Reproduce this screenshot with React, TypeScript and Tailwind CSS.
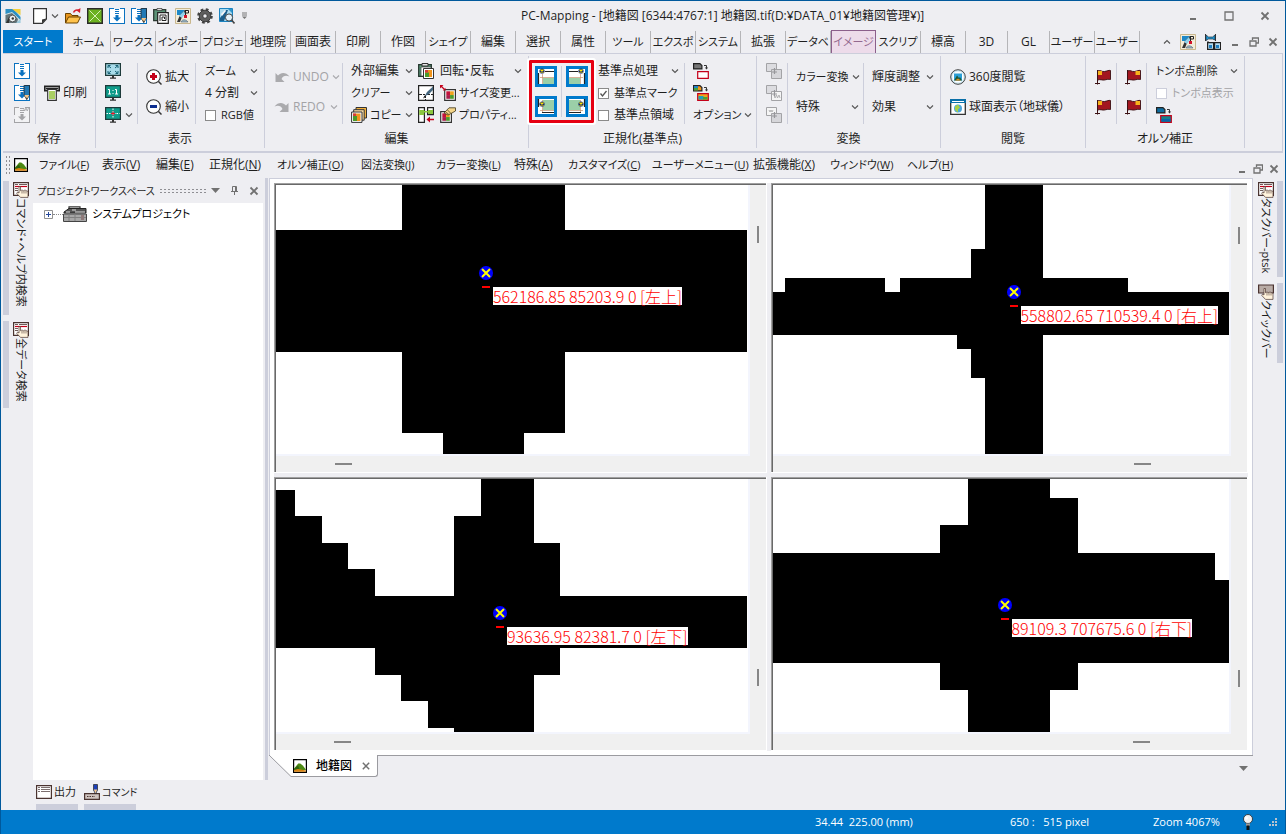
import type { ReactNode } from "react";

type IconProps = { children: ReactNode; size?: string; box?: string };

function Icon({ children, size = "size-4", box = "0 0 16 16" }: IconProps) {
  return (
    <svg viewBox={box} className={`${size} shrink-0`} aria-hidden="true">
      {children}
    </svg>
  );
}

function Chevron({ up = false, dim = false }: { up?: boolean; dim?: boolean }) {
  return (
    <Icon size="size-2" box="0 0 8 8">
      <path
        d={up ? "M1 5.5 4 2.5 7 5.5" : "M1 2.5 4 5.5 7 2.5"}
        fill="none"
        stroke={dim ? "#a9a9ad" : "#555"}
        strokeWidth="1.1"
      />
    </Icon>
  );
}

/* ---------- icons ---------- */

const MapLogo = () => (
  <Icon>
    <path d="M.5 1h15v14H.5z" fill="#d3e2e6" />
    <path d="M.5 1h8l7 8v3L7 4 .5 6z" fill="#2b8fc4" />
    <path d="M7 1h8.500v6z" fill="#f5cf3a" />
    <path d="M.5 7 7 5l6 6-1 4H.5z" fill="#63757a" />
    <circle cx="7.500" cy="10.500" r="3.400" fill="#eef2f3" stroke="#333" strokeWidth=".8" />
    <circle cx="7.800" cy="10.500" r="1.200" fill="#333" />
    <path d="M1 15 4 9v6z" fill="#333" />
    <path d="M11 15h4.500v-4z" fill="#9ecadd" />
  </Icon>
);

const NewDoc = () => (
  <Icon size="h-4 w-[14px]" box="0 0 14 16">
    <path d="M.6.600h12.800v10.400l-4 4.400H.6z" fill="#fff" stroke="#333" strokeWidth="1.200" />
    <path d="M13.400 10.500 9 11.500v4z" fill="#333" />
  </Icon>
);

const OpenFolder = () => (
  <Icon>
    <path d="M.5 15V5.500h5l1.500 2h6V9" fill="#e8951d" stroke="#6b4200" />
    <path d="M.5 15 3.500 9H15.500L12.500 15z" fill="#ffc34d" stroke="#6b4200" />
    <path d="M8.500 4.500C9.500 2 12 1.500 14 2.500" fill="none" stroke="#d4202e" strokeWidth="1.500" />
    <path d="m15.500 0-.5 5-3.500-2.500z" fill="#d4202e" />
  </Icon>
);

const GreenCross = () => (
  <Icon>
    <path d="M.7.700h14.600v14.600H.7z" fill="#6bb120" stroke="#2a2a2a" strokeWidth="1.400" />
    <path d="m2.500 2.500 11 11m0-11-11 11" stroke="#f2ffe0" strokeWidth=".8" />
  </Icon>
);

const SaveArrow = ({ pencil = false, gray = false }: { pencil?: boolean; gray?: boolean }) => (
  <Icon>
    <path
      d="M5 .5H.5v15h15V.5H11"
      fill={gray ? "#f2f2f4" : "#fff"}
      stroke={gray ? "#a3a3a6" : "#0a72c0"}
      strokeDasharray={gray ? "12 4 40" : undefined}
      shapeRendering="crispEdges"
    />
    <g fill={gray ? "#a3a3a6" : "#0a72c0"}>
      <path d="M6 1h4v1H6zM6 3h4v1H6zM6 5h4v1H6z" />
      <path d="M6.500 7h3v2.500H12L8 13.500 4 9.500h2.500z" />
    </g>
    {gray && <path d="m9.500 1 1.200 3 1.300-3 1.200 3 1.300-3" fill="none" stroke="#a3a3a6" strokeWidth=".8" />}
    {pencil && (
      <>
        <path d="M10 .4h5.500V10L12.800 14.600 10 10z" fill="#2179b5" stroke="#222" strokeWidth=".8" />
        <path d="M10.400 10h4.800l-2.400 4.500z" fill="#f4c78a" />
        <path d="m12 12.800.8 2 .8-2z" fill="#222" />
      </>
    )}
  </Icon>
);

const CopySpiral = () => (
  <Icon>
    <path d="M.7 1.700h12v11h-12z" fill="#5c9277" stroke="#2c3a33" strokeWidth="1.300" />
    <path d="M4 .5h5v2H4z" fill="#ddd" stroke="#333" strokeWidth=".7" />
    <path d="M4.700 4.700h10.600v10.600H4.700z" fill="#fff" stroke="#222" strokeWidth="1.200" />
    <path d="M7 13V7h6v5.500H9V9h2.500v2" fill="none" stroke="#222" />
  </Icon>
);

const MapTool = () => (
  <Icon>
    <path d="M.5.500h15v15H.5z" fill="#f3ecd9" stroke="#c9b78d" />
    <path d="M2 2h8L6 7H2z" fill="#1e88c7" />
    <path d="m2 14 3-7 5-5 1 1-4 6-2 5z" fill="#333" />
    <path d="m4 8 5-5 1 3-3 4z" fill="#8fd0ea" />
    <path d="M10.500 8V2M10.500 2.500h3V5h-3" fill="none" stroke="#222" />
    <path d="M9 7h3v3H9z" fill="#d3122a" />
    <path d="M6 14c1-3 5-3 7 0z" fill="#9bb7c2" stroke="#567" strokeWidth=".6" />
  </Icon>
);

const Gear = () => (
  <Icon>
    <circle cx="8" cy="8" r="6.500" fill="none" stroke="#444" strokeWidth="2.600" strokeDasharray="2.700 2.405" />
    <circle cx="8" cy="8" r="5.800" fill="#5e5e5e" stroke="#3c3c3c" />
    <circle cx="8" cy="8" r="2.200" fill="#eeeef2" stroke="#2c2c2c" strokeWidth=".8" />
  </Icon>
);

const MapSearch = () => (
  <Icon>
    <path d="M.5.500h13v13H.5z" fill="#a9dbf0" stroke="#1b83c0" />
    <path d="M1 10 7 2h2L5 13H1z" fill="#1b5f8c" />
    <path d="m2 6 4-4 1 1-4 5z" fill="#f7f7f7" />
    <path d="M9 1h4v4z" fill="#2f95cc" />
    <circle cx="10" cy="9.500" r="3.600" fill="#e3f2fa" stroke="#444" />
    <path d="m12.500 12 3 3.500" stroke="#444" strokeWidth="1.600" />
  </Icon>
);

const Printer = () => (
  <Icon>
    <path d="M.7 1.200h14.600v4.500H.7z" fill="#9b9b9b" stroke="#222" strokeWidth="1.400" />
    <path d="M2 3h12v1H2z" fill="#222" />
    <path d="M3.700 4.500h8.600v10.800H3.700z" fill="#fff" stroke="#333" strokeWidth="1.200" />
    <path d="M5 6h6v8H5z" fill="#a9ce63" />
  </Icon>
);

const Monitor = ({ kind }: { kind: "fit" | "one" | "cross" }) => (
  <Icon>
    <path
      d="M.6.600h14.800v11.800H.6z"
      fill={kind === "fit" ? "#a9dcea" : "#0f9c8a"}
      stroke="#1d3a3a"
      strokeWidth="1.200"
    />
    <path d="M7 12.500h2v2H7zM5 14.500h6v1.200H5z" fill="#333" />
    {kind === "fit" && (
      <path
        d="M3 5V2.500h2.500M10.500 2.500H13V5M13 8v2.500h-2.500M5.500 10.500H3V8M3 2.500l3 2.500M13 2.500 10 5M3 10.500 6 8M13 10.500 10 8"
        fill="none"
        stroke="#176073"
      />
    )}
    {kind === "one" && (
      <path d="M3 4.500h1.500V9M3 9h3M10 4.500h1.500V9M10 9h3M8 5v1M8 8v1" fill="none" stroke="#fff" />
    )}
    {kind === "cross" && (
      <>
        <path d="M8 1.500v10M1.500 6.500h13" stroke="#fff" strokeDasharray="1.500 1" />
        <path d="M8 4.500v4M6 6.500h4" stroke="#e0182d" />
      </>
    )}
  </Icon>
);

const Zoomer = ({ plus = false }: { plus?: boolean }) => (
  <Icon>
    <circle cx="7.500" cy="7.500" r="6.800" fill="#fdfdfd" stroke="#333" strokeWidth="1.100" />
    <path d="m12.500 12.500 3 3" stroke="#333" strokeWidth="1.500" />
    {plus ? (
      <path d="M6 4h3v2h2v3H9v2H6V9H4V6h2z" fill="#c4001a" />
    ) : (
      <path d="M4 6h7v3H4z" fill="#0b2d8f" />
    )}
  </Icon>
);

const CurveArrow = ({ flip = false }: { flip?: boolean }) => (
  <Icon>
    <path
      d={
        flip
          ? "M.5 7.500C4 3 9 3 12 6.500L14.500 4v9h-9l3-3C7 6.500 4 6 .5 7.500z"
          : "M15.500 7.500C12 3 7 3 4 6.500L1.500 4v9h9l-3-3C9 6.500 12 6 15.500 7.500z"
      }
      fill="#aaaaad"
    />
  </Icon>
);

const ColorTile = ({ x, y, s }: { x: number; y: number; s: number }) => (
  <g transform={`translate(${x} ${y}) scale(${s / 10})`}>
    <path d="M0 0h10v10H0z" fill="#fff" stroke="#333" strokeWidth="1.100" />
    <path d="M1.500 1.500h3.500V5H1.500z" fill="#c3133b" />
    <path d="M5 1.500h3.500V5H5z" fill="#f0a21c" />
    <path d="M1.500 5h3.500v3.500H1.500z" fill="#a91d4c" />
    <path d="M5 5h3.500v3.500H5z" fill="#4c9a2a" />
  </g>
);

const PasteTile = () => (
  <Icon>
    <path d="M.7 1.700h12.600v11.600H.7z" fill="#5f9a7d" stroke="#24362d" strokeWidth="1.300" />
    <path d="M4 .5h6v2.500H4z" fill="#e5e5e5" stroke="#333" />
    <path d="M3 4h10v9H3z" fill="#fff" stroke="#333" strokeWidth=".7" />
    <path d="M5.500 5.500h10v10h-10z" fill="#fff" stroke="#333" />
    <path d="M7 7h7v7H7z" fill="#f0941c" />
    <path d="M7 9.500h4V14H7z" fill="#4c9a2a" />
    <path d="M7 7h3v2.500H7z" fill="#d23c3c" />
  </Icon>
);

const CopyTile = () => (
  <Icon>
    <path d="M5 .5h10.500v10.500H5z" fill="#f3b03a" stroke="#333" />
    <path d="M2.700 2.700h10.500v10.500H2.700z" fill="#f7d9a3" stroke="#333" />
    <path d="M.6 5h10.400v10.400H.6z" fill="#fff" stroke="#333" />
    <path d="M2 6.500h7.500V14H2z" fill="#f0941c" />
    <path d="M2 9h4v5H2z" fill="#4c9a2a" />
    <path d="M2 6.500h3V9H2z" fill="#d23c3c" />
  </Icon>
);

const PenCut = () => (
  <Icon>
    <path d="M.6.600h14.800v14.800H.6z" fill="#fff" stroke="#222" strokeWidth="1.200" />
    <path d="M1 9.500h6M9 9.500h6M7.500 10v5" stroke="#222" strokeDasharray="3 1" />
    <path d="M15 1.500 9 7l-2.500 4.500L11 9l4-4z" fill="#45677f" />
    <path d="m6.500 10.500-1.500 3 3-1.500z" fill="#222" />
  </Icon>
);

const ResizeTile = () => (
  <Icon>
    <ColorTile x={4.700} y={4.700} s={10.700} />
    <path d="M1 1l3.500 3.500" stroke="#c4001a" strokeWidth="1.200" />
    <path d="M0 0h3.500L0 3.500z" fill="#c4001a" />
    <path d="M5.500 5.500H2.800L5.500 2.800z" fill="#c4001a" />
  </Icon>
);

const PropTile = () => (
  <Icon>
    <ColorTile x={0.700} y={4.700} s={10.700} />
    <path d="M4 6 9 .8h6.500V4L11 6.500 8 8z" fill="#f4d58a" stroke="#3b3319" strokeWidth=".8" />
    <path d="m5.500 5 3 2M7.500 3l3 3" stroke="#3b3319" strokeWidth=".7" />
  </Icon>
);

const MergeTile = () => (
  <Icon>
    <path d="M.6.600h5.800v14.800H.6zM9.600.600h5.800v7H9.600z" fill="#fff" stroke="#222" strokeWidth="1.200" />
    <path d="M1.200 3h5v5h-5zM10 3h5v4h-5z" fill="#8cc63f" />
    <path d="M6 4h4v1.500H6z" fill="#8cc63f" />
    <path d="M10 12.500h6" stroke="#c4001a" strokeWidth="1.500" />
    <path d="M12 9.500v6L8.500 12.500z" fill="#c4001a" />
  </Icon>
);

/* corner = where the control point sits in the sheet */
const CORNERS = {
  tl: { cx: 7, cy: 5, fill: "M8 12h11v6H8z", edge: "M3.500 7v11M10 5.500h9", cross: "M7.500 8v10M5 11.500h14" },
  tr: { cx: 15, cy: 5, fill: "M3 12h11v6H3z", edge: "M18.500 7v11M3 5.500h9", cross: "M14.500 8v10M3 11.500h14" },
  bl: { cx: 7, cy: 8, fill: "M8 4h11v10H8z", edge: "M3.500 3v8M7 16.500h12", cross: "M7.500 4v12M5 14.500h14" },
  br: { cx: 15, cy: 8, fill: "M3 4h11v10H3z", edge: "M18.500 3v8M3 16.500h12", cross: "M14.500 4v12M3 14.500h14" },
};

const CornerIcon = ({ corner }: { corner: keyof typeof CORNERS }) => {
  const c = CORNERS[corner];
  return (
    <Icon size="h-[21px] w-[22px]" box="0 0 22 21">
      <path d="M0 0h22v21H0z" fill="#007acc" />
      <path d="M3 3h16v15H3z" fill="#fff" />
      <path d={c.fill} fill="#9bcfa8" />
      <path d={c.cross} stroke="#c98f6a" strokeWidth=".7" />
      <path d={c.edge} stroke="#222" strokeWidth="1.200" />
      <circle cx={c.cx} cy={c.cy} r="2.600" fill="#1b2b6b" />
      <path d={`M${c.cx - 1.500} ${c.cy - 1.500}l3 3m0-3-3 3`} stroke="#ffe600" strokeWidth="1.200" />
    </Icon>
  );
};

const SwapTile = ({ kind }: { kind: "gray" | "color" | "blue" }) => (
  <Icon>
    <path
      d="M.6.600h6.300l2 2v3.300H.6z"
      fill={kind === "gray" ? "#777" : kind === "blue" ? "#0e6da0" : "#f0941c"}
      stroke="#222"
      strokeWidth="1.200"
    />
    {kind === "color" && <path d="M1 3h4v2.500H1z" fill="#4aa23a" />}
    {kind === "color" && <path d="M1 1h4v2H1z" fill="#1f82c6" />}
    <path d="M11 2.500h2.500V5" fill="none" stroke="#333" />
    <path d="M11.800 4.500h3.400l-1.700 2z" fill="#333" />
    <path
      d="M4.700 8.700h10.600v6.600H4.700z"
      fill={kind === "gray" ? "#fff" : kind === "blue" ? "#14808a" : "#f0a21c"}
      stroke="#c4001a"
      strokeWidth="1.200"
    />
    {kind === "color" && <path d="M5.500 11h5v3.500h-5z" fill="#1fa0b8" />}
    {kind === "color" && <path d="M10 12h4.500v2.500H10z" fill="#4aa23a" />}
    {kind === "blue" && <path d="M5.500 12h9v2.500h-9z" fill="#0763a8" />}
  </Icon>
);

const GrayLayers = ({ kind }: { kind: "plus" | "wave" | "both" }) => (
  <Icon>
    <path d="M.5.500h10v8H.5z" fill={kind === "both" ? "#f5f5f5" : "#dcdce0"} stroke="#a3a3a6" />
    <path d="M5.500 6.500h10v9h-10z" fill={kind === "wave" ? "#f5f5f5" : "#d6d6da"} stroke="#a3a3a6" />
    {kind !== "plus" && (
      <path
        d={kind === "both" ? "m3 3 1 2 1-2 1 2 1-2" : "m8 10 1 3 1.500-3 1 3 1.500-3 1 3"}
        fill="none"
        stroke="#a3a3a6"
        strokeWidth=".8"
      />
    )}
    <path d="M8.500 5v6M6 9h5" stroke="#97979b" strokeWidth="1.200" />
  </Icon>
);

const PanoIcon = () => (
  <Icon>
    <circle cx="8" cy="8" r="7.300" fill="#cfe8f2" stroke="#444" />
    <circle cx="8" cy="8" r="5.600" fill="#fff" />
    <path d="M4 4.500h8v7H4z" fill="#2b9fd6" />
    <path d="m4 11.500 3-5 2 2.500 1-1 2 3.500z" fill="#1d5b3b" />
    <path d="m5 11.500 3-2 3 2z" fill="#e38b1c" />
  </Icon>
);

const GlobeWindow = () => (
  <Icon>
    <path d="M.7.700h14.600v14.600H.7z" fill="#fff" stroke="#333" strokeWidth="1.300" />
    <path d="M0 0h16v4H0z" fill="#0a6fa8" />
    <path d="M2 2.500h12" stroke="#fff" />
    <circle cx="8" cy="9.500" r="4" fill="#4ea6da" />
    <path d="M5 7.500 8 5.500l2 3-2 2v3L5 11z" fill="#a9cf45" />
  </Icon>
);

const Flag = ({ left = false }: { left?: boolean }) => (
  <Icon>
    <path
      d="M2.500 2c3-1.500 4 1 7 .5s4-1.500 6-1v9c-2-.5-4 0-6 .5s-4-1-7 0z"
      fill="#a3161f"
      stroke="#3b1013"
      strokeWidth=".9"
    />
    <path d={left ? "M3 2h4v4H3z" : "M10.500 2h4.500v4h-4.500z"} fill="#f7b21b" />
    <path d="M2.500 1v14.500M0 14.500h5" fill="none" stroke="#3b1013" />
  </Icon>
);

const Picture = () => (
  <Icon size="size-[14px]" box="0 0 14 14">
    <path d="M.6.600h12.800v12.800H.6z" fill="#fff" stroke="#000" strokeWidth="1.200" />
    <path d="m1.200 9.500 4-5h2l2.600 2 3 4v.5H1.200z" fill="#4d8a14" />
    <path d="m1.200 9.500 3.800-3 2 5H1.200z" fill="#2f6410" />
    <path d="M1.200 11 5 10l7.800 1.500v1.300H1.200z" fill="#d9820f" />
  </Icon>
);

const HandList = ({ plain = false }: { plain?: boolean }) => (
  <Icon>
    <path
      d={plain ? "M.6 1h14.800v8H.6z" : "M.6.600h14.800v12.800H.6z"}
      fill={plain ? "#b9aca6" : "#fff"}
      stroke="#4a3330"
      strokeWidth="1.200"
    />
    {!plain && <path d="M2 2.500h3M6 2.500h8M2 6.500h3M2 8.500h3" stroke="#4a3330" strokeWidth=".8" />}
    {!plain && <path d="M2 4.500h12" stroke="#c4001a" strokeWidth="1.200" />}
    <path
      d="M6 4.500h1.500v4.200L9 8l1.500.7L12 8l1.500.7 1.500.8v5.900H7.500L3.800 11.500 4.500 10 6 11z"
      fill="#fff3dc"
      stroke="#4a3330"
      strokeWidth=".7"
    />
    <path d="M9 9v2.500M11 9v2.500M13 9v2.500" stroke="#4a3330" strokeWidth=".6" />
  </Icon>
);

const TwinScreens = () => (
  <Icon>
    <path d="M.5 0v7M10.500 0v7" stroke="#333" />
    <path d="M1 1 3.500 3h4L10 1v5L7.500 5h-4L1 6.500z" fill="#1f96d2" stroke="#234" strokeWidth=".7" />
    <path d="M3 7v6" stroke="#333" />
    <path d="M2.600 8.600h6v6.800h-6zM9.600 8.600h6v6.800h-6z" fill="#b9dcef" stroke="#222" strokeWidth="1.200" />
    <path d="M4 11h3v3H4zM11 11h3v3h-3z" fill="#1f7ec0" />
  </Icon>
);

const ProjectBox = () => (
  <Icon size="h-4 w-6" box="0 0 24 16">
    <path d="M6 4V.8h11V3" fill="#fff" stroke="#333" strokeWidth="1.200" />
    <path d="M1 6 6 2.500h17V7H1z" fill="#555" stroke="#222" />
    <path d="M3 6h4M9 4h4M12 6h10" stroke="#ddd" />
    <path d="M.5 8h23v7.500H.5z" fill="#a6a6a6" stroke="#444" />
    <path d="M1 11.500h22M6 8v7M12 8v7" stroke="#808080" />
    <path d="M18 9h3v5h-3z" fill="#8f7a7a" />
  </Icon>
);

const OutputIcon = () => (
  <Icon>
    <path d="M.6 1.600h14.800v12.800H.6z" fill="#fff" stroke="#4a3330" strokeWidth="1.200" />
    <path d="M2 3.500h2M5 3.500h9M2 5.500h2M5 5.500h9M2 7.500h2M5 7.500h9" stroke="#5a4a4a" strokeWidth=".8" />
  </Icon>
);

const CommandIcon = () => (
  <Icon>
    <path d="M.6 9.600h14.800v5.800H.6z" fill="#cfc4c0" stroke="#4a3330" strokeWidth="1.200" />
    <path d="M3 12.500h8" stroke="#4a3330" strokeDasharray="1.500 1" />
    <path d="M9.500.500h4V6l-2 4-2-4z" fill="#1b3fb8" stroke="#222" strokeWidth=".7" />
    <path d="M9.800 5.500h3.400L11.500 9.500z" fill="#f4c78a" />
  </Icon>
);

const Bulb = () => (
  <Icon size="h-4 w-3" box="0 0 12 16">
    <circle cx="6" cy="5" r="4.500" fill="#f1f1f1" stroke="#222" strokeWidth=".8" />
    <circle cx="4.500" cy="4" r="1.500" fill="#fff" />
    <path d="M4 9.500h4V12H4z" fill="#999" />
    <path d="M4.500 11.500h3V16h-3z" fill="#111" />
  </Icon>
);

const Minimize = () => (
  <Icon size="size-[10px]" box="0 0 10 10">
    <path d="M2 8h6" stroke="#717171" strokeWidth="2" />
  </Icon>
);

const Restore = () => (
  <Icon size="size-[10px]" box="0 0 10 10">
    <path d="M3.500 3V1h6v5h-2M1 4h6v5H1z" fill="none" stroke="#717171" strokeWidth="1.300" />
  </Icon>
);

const Maximize = () => (
  <Icon size="size-[10px]" box="0 0 10 10">
    <path d="M1 1h8v8H1z" fill="none" stroke="#717171" strokeWidth="1.300" />
  </Icon>
);

const Close = () => (
  <Icon size="size-[10px]" box="0 0 10 10">
    <path d="m1.500 1.500 7 7m0-7-7 7" stroke="#717171" strokeWidth="1.800" />
  </Icon>
);

const Triangle = () => (
  <Icon size="h-[5px] w-[9px]" box="0 0 9 5">
    <path d="M0 0h9L4.500 5z" fill="#717171" />
  </Icon>
);

/* ---------- ribbon pieces ---------- */

function Group({ label, className, children }: { label: string; className: string; children: ReactNode }) {
  return (
    <section className={`${className} flex shrink-0 flex-col border-r border-[#cccedb] pt-1`} aria-label={label}>
      <div className="flex h-[66px] shrink-0">{children}</div>
      <div className="pt-[3px] text-center leading-5">{label}</div>
    </section>
  );
}

const Sep = () => <div className="mt-[3px] h-[61px] w-px shrink-0 bg-[#cccedb]" />;

function Item({ icon, text, dim = false }: { icon?: ReactNode; text: string; dim?: boolean }) {
  return (
    <button disabled={dim} className={`flex h-[22px] items-center gap-[3px] ${dim ? "text-[#a3a3a6]" : ""}`}>
      {icon}
      {text && <span>{text}</span>}
    </button>
  );
}

function Drop({ icon, text, dim = false, kana = false }: { icon?: ReactNode; text: string; dim?: boolean; kana?: boolean }) {
  return (
    <button
      disabled={dim}
      aria-haspopup="menu"
      className={`flex h-[22px] w-full items-center gap-[3px] ${dim ? "text-[#a3a3a6]" : ""} ${kana ? "text-[11px]" : ""}`}
    >
      {icon}
      <span>{text}</span>
      <span className="ml-auto">
        <Chevron dim={dim} />
      </span>
    </button>
  );
}

function IconButton({ label, children, className = "h-[22px]" }: { label: string; children: ReactNode; className?: string }) {
  return (
    <button aria-label={label} className={`${className} flex items-center`}>
      {children}
    </button>
  );
}

type CheckProps = { id: string; text: string; checked?: boolean; dim?: boolean; kana?: boolean };

function Check({ id, text, checked = false, dim = false, kana = false }: CheckProps) {
  return (
    <div className={`flex h-[22px] items-center gap-[5px] ${kana ? "text-[11px]" : ""}`}>
      <span className="relative size-[11px]">
        <input
          id={id}
          type="checkbox"
          defaultChecked={checked}
          disabled={dim}
          className={`peer block size-[11px] appearance-none border bg-white ${dim ? "border-[#cccedb]" : "border-[#8a8a8a]"}`}
        />
        <svg viewBox="0 0 11 11" className="pointer-events-none absolute inset-0 hidden size-[11px] peer-checked:block">
          <path d="m2.500 5.500 2 2.500 4-5" fill="none" stroke="#555" strokeWidth="1.300" />
        </svg>
      </span>
      <label htmlFor={id} className={dim ? "text-[#a3a3a6]" : ""}>
        {text}
      </label>
    </div>
  );
}

/* ---------- data ---------- */

const TABS = [
  { name: "ワークス", width: "w-[45px]", kana: true },
  { name: "インポー", width: "w-[45px]", kana: true },
  { name: "プロジェ", width: "w-[45px]", kana: true },
  { name: "地理院", width: "w-[45px]" },
  { name: "画面表", width: "w-[45px]" },
  { name: "印刷", width: "w-[45px]" },
  { name: "作図", width: "w-[45px]" },
  { name: "シェイプ", width: "w-[45px]", kana: true },
  { name: "編集", width: "w-[45px]" },
  { name: "選択", width: "w-[45px]" },
  { name: "属性", width: "w-[45px]" },
  { name: "ツール", width: "w-[45px]", kana: true },
  { name: "エクスポ", width: "w-[45px]", kana: true },
  { name: "システム", width: "w-[45px]", kana: true },
  { name: "拡張", width: "w-[45px]" },
  { name: "データベ", width: "w-[45px]", kana: true },
  { name: "イメージ", width: "w-[45px]", kana: true, active: true },
  { name: "スクリプ", width: "w-[45px]", kana: true },
  { name: "標高", width: "w-[45px]" },
  { name: "3D", width: "w-[42px]" },
  { name: "GL", width: "w-[42px]" },
  { name: "ユーザー", width: "w-[45px]", kana: true },
  { name: "ユーザー", width: "w-[45px]", kana: true },
];

const MENUS = [
  { name: "ファイル", key: "F", width: "w-[63px]", kana: true },
  { name: "表示", key: "V", width: "w-[54px]" },
  { name: "編集", key: "E", width: "w-[53px]" },
  { name: "正規化", key: "N", width: "w-[68px]" },
  { name: "オルソ補正", key: "O", width: "w-[84px]", kana: true },
  { name: "図法変換", key: "J", width: "w-[75px]", kana: true },
  { name: "カラー変換", key: "L", width: "w-[78px]", kana: true },
  { name: "特殊", key: "A", width: "w-[54px]" },
  { name: "カスタマイズ", key: "C", width: "w-[84px]", kana: true },
  { name: "ユーザーメニュー", key: "U", width: "w-[101px]", kana: true },
  { name: "拡張機能", key: "X", width: "w-[77px]" },
  { name: "ウィンドウ", key: "W", width: "w-[77px]", kana: true },
  { name: "ヘルプ", key: "H", width: "w-[60px]", kana: true },
];

const PANES = [
  {
    shape: "M126 0H289V45H471V167H289V248H248V269H167V248H126V167H0V45H126z",
    x: 210, y: 88,
    label: "562186.85 85203.9 0 [左上]",
    vThumb: "mt-[41px]", hThumb: "ml-[59px]",
  },
  {
    shape:
      "M212 0H270V93H355V107H456V150H270V269H212V193H198V164H184V150H0V107H12V93H112V107H127V93H198V64H212z",
    x: 241, y: 107,
    label: "558802.65 710539.4 0 [右上]",
    vThumb: "mt-[42px]", hThumb: "ml-[361px]",
  },
  {
    shape:
      "M0 11H19V37H46V64H72V90H99V117H178V37H205V0H258V64H284V117H471V169H284V196H258V253H178V249H152V222H125V196H99V169H0z",
    x: 224, y: 134,
    label: "93636.95 82381.7 0 [左下]",
    vThumb: "mt-[190px]", hThumb: "ml-[58px]",
  },
  {
    shape:
      "M195 0H277V19H305V74H442V101H456V184H305V211H277V253H195V211H167V184H0V74H167V46H195z",
    x: 232, y: 126,
    label: "89109.3 707675.6 0 [右下]",
    vThumb: "mt-[191px]", hThumb: "ml-[360px]",
  },
];

function Pane({ pane }: { pane: (typeof PANES)[number] }) {
  return (
    <div className="flex min-h-0 min-w-0 border-r border-b border-white bg-[#f0f0f0]">
      <div className="flex min-w-0 flex-1 border-t border-l border-[#a0a0a0]">
        <div className="flex min-w-0 flex-1 flex-col border-t border-l border-[#696969]">
          <div className="flex min-h-0 flex-1">
            <div className="relative min-w-0 flex-1 overflow-hidden border-r-2 border-b-2 border-[#f3f5fd] bg-white">
              <svg width="480" height="280" className="absolute top-0 left-0" aria-hidden="true">
                <path d={pane.shape} fill="#000" shapeRendering="crispEdges" />
              </svg>
              <div className="absolute" style={{ left: pane.x - 7, top: pane.y - 7 }}>
                <Icon size="size-[14px]" box="0 0 14 14">
                  <circle cx="7" cy="7" r="7" fill="#0000ff" />
                  <path d="m3 3 8 8m0-8-8 8" stroke="#ffff00" strokeWidth="2" />
                </Icon>
                <div className="mt-[6px] ml-[3px] h-[2px] w-2 bg-[#ff0000]" />
              </div>
              <div
                className="absolute bg-white font-['Noto_Sans_CJK_JP',sans-serif] text-[16px] leading-[18px] font-light text-[#ff0000]"
                style={{ left: pane.x + 7, top: pane.y + 14 }}
              >
                {pane.label}
              </div>
            </div>
            <div className="w-4 shrink-0">
              <div className={`${pane.vThumb} ml-[7px] h-[17px] w-[2px] bg-[#868686]`} />
            </div>
          </div>
          <div className="h-4 shrink-0">
            <div className={`${pane.hThumb} mt-[7px] h-[2px] w-[17px] bg-[#868686]`} />
          </div>
        </div>
      </div>
    </div>
  );
}

function SideTab({ text, height, right = false, plain = false }: { text: string; height: string; right?: boolean; plain?: boolean }) {
  return (
    <button className={`${height} flex shrink-0 ${right ? "flex-row-reverse" : ""}`}>
      <span className="h-full w-[6px] bg-[#cccedb]" />
      <span className={`flex flex-col items-center pt-px ${right ? "mr-[3px]" : "ml-1"}`}>
        <HandList plain={plain} />
        <span className="text-[11px] leading-4 [text-orientation:sideways] [writing-mode:vertical-rl]">{text}</span>
      </span>
    </button>
  );
}

/* ---------- page ---------- */

function TitleBar() {
  return (
    <header className="flex h-[29px] items-center pl-1">
      <div className="flex w-[500px] items-center gap-[6px]">
        <span className="pr-[6px]"><MapLogo /></span>
        <div className="flex items-center gap-1">
          <IconButton label="新規"><NewDoc /></IconButton>
          <Chevron />
        </div>
        <IconButton label="開く"><OpenFolder /></IconButton>
        <IconButton label="閉じる"><GreenCross /></IconButton>
        <IconButton label="保存"><SaveArrow /></IconButton>
        <IconButton label="名前を付けて保存"><SaveArrow pencil /></IconButton>
        <IconButton label="コピー"><CopySpiral /></IconButton>
        <IconButton label="地図"><MapTool /></IconButton>
        <IconButton label="設定"><Gear /></IconButton>
        <IconButton label="検索"><MapSearch /></IconButton>
        <IconButton label="カスタマイズ">
          <Icon size="h-2 w-[7px]" box="0 0 7 8">
            <path d="M1 1h5M1 3h5" stroke="#777" />
            <path d="M1 4.500h5L3.500 7z" fill="#777" />
          </Icon>
        </IconButton>
      </div>
      <h1 className="pl-4">PC-Mapping - [地籍図 [6344:4767:1] 地籍図.tif(D:¥DATA_01¥地籍図管理¥)]</h1>
      <div className="ml-auto flex gap-[26px] pr-[15px]">
        <IconButton label="最小化"><Minimize /></IconButton>
        <IconButton label="最大化"><Maximize /></IconButton>
        <IconButton label="終了"><Close /></IconButton>
      </div>
    </header>
  );
}

function TabRow() {
  return (
    <nav className="mx-[2px] flex h-6 border-b border-[#cccedb]">
      <button className="w-[60px] bg-[#007acc] text-[11px] text-white">スタート</button>
      <button className="mt-px w-12 border-r border-[#b5b5b8] pl-1 text-[11px]">ホーム</button>
      {TABS.map((tab, i) => (
        <button
          key={i}
          className={`${tab.width} ${tab.kana ? "text-[11px]" : "text-[12px]"} ${
            tab.active
              ? "border border-b-0 border-[#8b5f8b] bg-[#eddbea] text-[#94698f]"
              : "mt-px border-r border-[#b5b5b8]"
          } shrink-0 overflow-hidden`}
        >
          {tab.name}
        </button>
      ))}
      <div className="ml-auto flex items-center gap-[9px] pr-[5px]">
        <IconButton label="リボンを畳む"><Chevron up /></IconButton>
        <IconButton label="地図"><MapTool /></IconButton>
        <IconButton label="画面"><TwinScreens /></IconButton>
        <IconButton label="最小化"><Minimize /></IconButton>
        <IconButton label="元に戻す"><Restore /></IconButton>
        <IconButton label="閉じる"><Close /></IconButton>
      </div>
    </nav>
  );
}

function Ribbon() {
  return (
    <div className="mx-[2px] border-r border-b-2 border-[#cccedb] pt-[2px] pb-[3px]">
      <div className="flex h-[92px]">
        <Group label="保存" className="w-[93px]">
          <div className="w-8 pl-[11px]">
            <IconButton label="保存"><SaveArrow /></IconButton>
            <IconButton label="編集保存"><SaveArrow pencil /></IconButton>
            <IconButton label="別名保存"><SaveArrow gray /></IconButton>
          </div>
          <Sep />
          <div className="pt-[22px] pl-2">
            <Item icon={<Printer />} text="印刷" />
          </div>
        </Group>

        <Group label="表示" className="w-[169px]">
          <div className="w-[41px] pr-1 pl-[9px]">
            <IconButton label="全体"><Monitor kind="fit" /></IconButton>
            <IconButton label="等倍"><Monitor kind="one" /></IconButton>
            <button aria-label="中心" className="flex h-[22px] w-full items-center justify-between">
              <Monitor kind="cross" />
              <Chevron />
            </button>
          </div>
          <Sep />
          <div className="flex w-[57px] flex-col gap-2 pt-[6px] pl-2">
            <Item icon={<Zoomer plus />} text="拡大" />
            <Item icon={<Zoomer />} text="縮小" />
          </div>
          <Sep />
          <div className="w-[62px] pl-[9px]">
            <Drop text="ズーム" kana />
            <Drop text="4 分割" />
            <Check id="rgb" text="RGB値" kana />
          </div>
        </Group>

        <Group label="編集" className="w-[264px]">
          <div className="flex w-[77px] flex-col gap-2 pt-[6px] pr-1 pl-[9px]">
            <Drop icon={<CurveArrow />} text="UNDO" dim />
            <Drop icon={<CurveArrow flip />} text="REDO" dim />
          </div>
          <Sep />
          <div className="w-[70px] pl-2">
            <Drop text="外部編集" />
            <Drop text="クリアー" kana />
            <Drop icon={<CopyTile />} text="コピー" kana />
          </div>
          <div className="w-[27px] pl-[5px]">
            <IconButton label="貼り付け"><PasteTile /></IconButton>
            <IconButton label="切り取り"><PenCut /></IconButton>
            <IconButton label="結合"><MergeTile /></IconButton>
          </div>
          <div className="w-[82px]">
            <Drop text="回転・反転" />
            <button className="flex h-[22px] items-center gap-[3px] text-[11px]">
              <ResizeTile />
              サイズ変更...
            </button>
            <button className="flex h-[22px] items-center gap-[3px] text-[11px]">
              <PropTile />
              プロパティ...
            </button>
          </div>
        </Group>

        <Group label="正規化(基準点)" className="w-[228px]">
          <div className="flex h-[63px] w-[65px] justify-between rounded-[1px] border-[3px] border-[#e60012] p-[3px] outline-2 outline-white">
            <div className="flex flex-col justify-between">
              <IconButton label="左上" className=""><CornerIcon corner="tl" /></IconButton>
              <IconButton label="左下" className=""><CornerIcon corner="bl" /></IconButton>
            </div>
            <div className="w-px bg-[#cccedb]" />
            <div className="flex flex-col justify-between">
              <IconButton label="右上" className=""><CornerIcon corner="tr" /></IconButton>
              <IconButton label="右下" className=""><CornerIcon corner="br" /></IconButton>
            </div>
          </div>
          <div className="w-[90px] pr-[5px] pl-1">
            <Drop text="基準点処理" />
            <Check id="mark" text="基準点マーク" checked kana />
            <Check id="area" text="基準点領域" />
          </div>
          <Sep />
          <div className="w-[65px] pl-2">
            <IconButton label="白黒入替"><SwapTile kind="gray" /></IconButton>
            <IconButton label="色入替"><SwapTile kind="color" /></IconButton>
            <Drop text="オプション" kana />
          </div>
        </Group>

        <Group label="変換" className="w-[184px]">
          <div className="w-[30px] pl-[9px]">
            <IconButton label="追加"><GrayLayers kind="plus" /></IconButton>
            <IconButton label="波形"><GrayLayers kind="wave" /></IconButton>
            <IconButton label="合成"><GrayLayers kind="both" /></IconButton>
          </div>
          <Sep />
          <div className="flex w-[75px] flex-col gap-2 pt-[6px] pr-1 pl-2">
            <Drop text="カラー変換" kana />
            <Drop text="特殊" />
          </div>
          <Sep />
          <div className="flex w-[70px] flex-col gap-2 pt-[6px] pl-2">
            <Drop text="輝度調整" />
            <Drop text="効果" />
          </div>
        </Group>

        <Group label="閲覧" className="w-[145px]">
          <div className="flex flex-col gap-2 pt-[6px] pl-[9px]">
            <Item icon={<PanoIcon />} text="360度閲覧" />
            <Item icon={<GlobeWindow />} text="球面表示（地球儀）" />
          </div>
        </Group>

        <Group label="オルソ補正" className="w-[159px]">
          <div className="flex w-[30px] flex-col gap-2 pt-[6px] pl-[9px]">
            <IconButton label="左上トンボ"><Flag left /></IconButton>
            <IconButton label="左下トンボ"><Flag left /></IconButton>
          </div>
          <Sep />
          <div className="flex w-[29px] flex-col gap-2 pt-[6px] pl-2">
            <IconButton label="右上トンボ"><Flag /></IconButton>
            <IconButton label="右下トンボ"><Flag /></IconButton>
          </div>
          <Sep />
          <div className="w-[91px] pl-[9px]">
            <Drop text="トンボ点削除" kana />
            <Check id="tombo" text="トンボ点表示" dim kana />
            <IconButton label="入替"><SwapTile kind="blue" /></IconButton>
          </div>
        </Group>
      </div>
    </div>
  );
}

function MenuBar() {
  return (
    <div className="flex h-[25px] items-center pb-[2px] pl-1">
      <div className="h-5 w-[5px] bg-[radial-gradient(#8f8f94_1px,transparent_1px)] bg-size-[3px_4px]" />
      <div className="w-[29px] pl-1"><Picture /></div>
      {MENUS.map((m) => (
        <button key={m.key} className={`${m.width} ${m.kana ? "text-[11px]" : "text-[12px]"} shrink-0 text-left`}>
          {m.name}(<u>{m.key}</u>)
        </button>
      ))}
      <div className="mt-2 ml-auto flex gap-[6px] pr-[6px]">
        <IconButton label="最小化" className=""><Minimize /></IconButton>
        <IconButton label="元に戻す" className=""><Restore /></IconButton>
        <IconButton label="閉じる" className=""><Close /></IconButton>
      </div>
    </div>
  );
}

function Workspace() {
  return (
    <aside className="flex w-[230px] shrink-0 flex-col">
      <div className="flex h-[25px] shrink-0 items-center pl-1">
        <h2 className="text-[10px]">プロジェクトワークスペース</h2>
        <div className="mx-1 h-[6px] flex-1 bg-[radial-gradient(#8f8f94_1px,transparent_1px)] bg-size-[4px_3px]" />
        <div className="flex items-center gap-[10px] pr-1">
          <IconButton label="メニュー" className=""><Triangle /></IconButton>
          <IconButton label="固定" className="">
            <Icon size="size-[9px]" box="0 0 9 9">
              <path d="M2.500 5V.500h4V5M1 5.500h7M4.500 6v3" fill="none" stroke="#717171" />
              <path d="M5.500 1v4" stroke="#717171" />
            </Icon>
          </IconButton>
          <IconButton label="閉じる" className=""><Close /></IconButton>
        </div>
      </div>
      <div className="flex-1 bg-white pt-[2px] pl-[11px]">
        <div className="flex h-[18px] items-center">
          <button aria-label="展開">
            <Icon size="size-[9px]" box="0 0 9 9">
              <path d="M.5.500h8v8h-8z" fill="#fff" stroke="#919191" />
              <path d="M2 4.500h5M4.500 2v5" stroke="#24479a" />
            </Icon>
          </button>
          <span className="w-[10px] border-t border-dotted border-[#888]" />
          <ProjectBox />
          <span className="pl-[5px] text-[11px] text-black">システムプロジェクト</span>
        </div>
      </div>
    </aside>
  );
}

function DocumentArea() {
  return (
    <div className="flex min-w-0 flex-1 flex-col">
      <div className="flex min-h-0 flex-1 border-t border-r border-l border-[#cccedb] bg-white p-1">
        <div className="grid min-h-0 flex-1 grid-cols-[492fr_477fr] grid-rows-[290fr_274fr] gap-1 bg-[#eeeef2]">
          {PANES.map((p) => (
            <Pane key={p.label} pane={p} />
          ))}
        </div>
      </div>
      <div className="flex h-[25px] shrink-0 items-start">
        <svg viewBox="0 0 24 22" className="h-[22px] w-6 shrink-0" aria-hidden="true">
          <path d="M0 0h24v22h-1z" fill="#fff" />
          <path d="M0 0 22 21.500h2" fill="none" stroke="#9b9ba0" />
        </svg>
        <button className="flex h-[22px] items-center rounded-br-[3px] border-r border-b border-[#9b9ba0] bg-white pr-[7px] text-black">
          <Picture />
          <span className="pr-[10px] pl-[9px] font-medium">地籍図</span>
          <Icon size="size-2" box="0 0 10 10">
            <path d="m1 1 8 8m0-8-8 8" stroke="#717171" strokeWidth="1.800" />
          </Icon>
        </button>
        <div className="flex flex-1 justify-end self-stretch border-t border-[#9b9ba0] pt-[10px] pr-[5px]">
          <button aria-label="文書一覧" className="self-start"><Triangle /></button>
        </div>
      </div>
    </div>
  );
}

export default function App() {
  return (
    <div className="flex h-screen min-h-[600px] flex-col overflow-hidden border border-b-0 border-[#00599c] bg-[#eeeef2] font-['Open_Sans','Noto_Sans_CJK_JP',sans-serif] text-[12px] leading-4 whitespace-nowrap text-[#1e1e1e] [font-feature-settings:'palt']">
      <TitleBar />
      <TabRow />
      <Ribbon />
      <MenuBar />

      <main className="flex min-h-0 flex-1">
        <div className="flex w-8 shrink-0 flex-col gap-[6px] pt-[3px] pl-[2px]">
          <SideTab text="コマンド・ヘルプ内検索" height="h-[134px]" />
          <SideTab text="全データ検索" height="h-[87px]" />
        </div>
        <Workspace />
        <div className="mr-px ml-[2px] w-[3px] shrink-0 bg-[#cccedb]" />
        <DocumentArea />
        <div className="flex w-8 shrink-0 flex-col items-end gap-[6px] pt-[3px] pr-[2px]">
          <SideTab text="タスクバー-ptsk" height="h-[96px]" right />
          <SideTab text="クイックバー" height="h-[80px]" right plain />
        </div>
      </main>

      <div className="flex h-[30px] shrink-0 gap-[6px] pl-[35px]">
        <button className="flex w-[42px] items-center gap-[2px] border-b-[6px] border-[#cccedb] text-[11px]">
          <OutputIcon />
          出力
        </button>
        <button className="flex w-[52px] items-center gap-[2px] border-b-[6px] border-[#cccedb] text-[10px]">
          <CommandIcon />
          コマンド
        </button>
      </div>

      <footer className="-mx-px flex h-6 shrink-0 items-center justify-end bg-[#007acc] pr-[9px] text-[11px] text-white">
        <span className="w-[195px] whitespace-pre">34.44  225.00 (mm)</span>
        <span className="w-[143px] whitespace-pre">650 :   515 pixel</span>
        <span className="w-[89px]">Zoom 4067%</span>
        <Bulb />
        <span className="w-[15px]" />
        <Icon size="size-2" box="0 0 8 8">
          <path d="M6 0h2v2H6zM3 3h2v2H3zM6 3h2v2H6zM0 6h2v2H0zM3 6h2v2H3zM6 6h2v2H6z" fill="#b8c4cf" />
        </Icon>
      </footer>
    </div>
  );
}
